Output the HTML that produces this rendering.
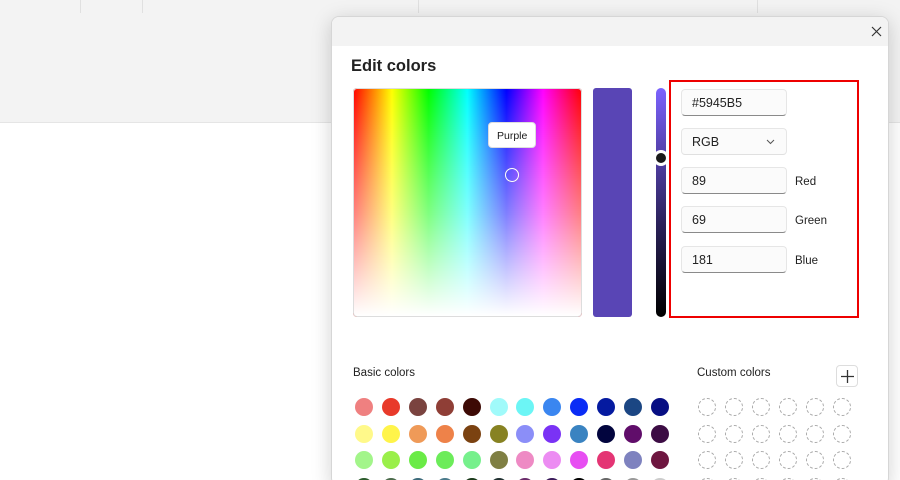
<!DOCTYPE html>
<html><head><style>
*{margin:0;padding:0;box-sizing:border-box}
html,body{width:900px;height:480px;overflow:hidden}
body{background:#fff;font-family:"Liberation Sans",sans-serif;position:relative;color:#1a1a1a}
.abs{position:absolute}
.top{left:0;top:0;width:900px;height:123px;background:#f3f3f3;border-bottom:1px solid #e5e5e5}
.sep{top:0;width:1px;height:13px;background:#e0e0e0}
.dlg{left:331px;top:16px;width:558px;height:470px;background:#fff;border:1px solid #d6d6d6;border-radius:8px;box-shadow:0 4px 20px rgba(0,0,0,.18);overflow:hidden}
.tb{left:0;top:0;width:558px;height:29px;background:#f3f3f3}
.inp{left:681px;width:106px;height:27px;border:1px solid #e6e6e6;border-bottom:1px solid #8a8a8a;border-radius:4px;background:#fbfbfb;font-size:12.5px;padding:6px 0 0 10px;color:#222}
.lbl{font-size:11.5px;color:#222}
.c{width:18px;height:18px;border-radius:50%}
.cc{width:18px;height:18px;border-radius:50%;border:1px dashed #aaa}
</style></head><body>
<div class="abs top"></div>
<div class="abs sep" style="left:80px"></div><div class="abs sep" style="left:142px"></div><div class="abs sep" style="left:418px"></div><div class="abs sep" style="left:757px"></div>
<div class="abs dlg"><div class="abs tb"></div>
<svg class="abs" style="left:539px;top:9px" width="11" height="11" viewBox="0 0 11 11"><path d="M1 1L10 10M10 1L1 10" stroke="#333" stroke-width="1.2"/></svg></div>
<div class="abs" style="left:351px;top:57px;font-size:16.5px;font-weight:bold;color:#222">Edit colors</div>
<div class="abs" style="left:353px;top:88px;width:229px;height:229px;border-radius:4px;background:linear-gradient(to right,#f00,#ff0 17%,#0f0 33%,#0ff 50%,#00f 67%,#f0f 83%,#f00)"></div>
<div class="abs" style="left:353px;top:88px;width:229px;height:229px;border-radius:4px;background:linear-gradient(to bottom,rgba(255,255,255,0),rgba(255,255,255,.5) 55%,#fff);border:1px solid #ddd"></div>
<div class="abs" style="left:488px;top:122px;width:48px;height:26px;background:#fff;border:1px solid #ddd;border-radius:4px;font-size:10.5px;padding:7px 0 0 8px">Purple</div>
<div class="abs" style="left:505px;top:168px;width:14px;height:14px;border-radius:50%;border:1.5px solid #fff;box-shadow:0 0 1px #888"></div>
<div class="abs" style="left:593px;top:88px;width:39px;height:229px;background:#5945b5;border-radius:3px"></div>
<div class="abs" style="left:656px;top:88px;width:10px;height:229px;border-radius:5px;background:linear-gradient(#7b63ff,#5945b5 25%,#2a2158 60%,#000)"></div>
<div class="abs" style="left:653px;top:150px;width:16px;height:16px;border-radius:50%;background:#1a1a1a;border:3px solid #fff"></div>
<div class="abs" style="left:669px;top:80px;width:190px;height:238px;border:2px solid #e00"></div>
<div class="abs inp" style="top:89px">#5945B5</div>
<div class="abs inp" style="top:128px;border-bottom-color:#e0e0e0">RGB<svg style="position:absolute;left:84px;top:10px" width="9" height="6" viewBox="0 0 9 6"><path d="M1 1L4.5 4.5L8 1" stroke="#555" fill="none" stroke-width="1"/></svg></div>
<div class="abs inp" style="top:167px">89</div>
<div class="abs inp" style="top:206px">69</div>
<div class="abs inp" style="top:246px">181</div>
<div class="abs lbl" style="left:795px;top:176px">Red</div>
<div class="abs lbl" style="left:795px;top:215px">Green</div>
<div class="abs lbl" style="left:795px;top:255px">Blue</div>
<div class="abs lbl" style="left:353px;top:367px">Basic colors</div>
<div class="abs lbl" style="left:697px;top:367px">Custom colors</div>
<div class="abs" style="left:836px;top:365px;width:22px;height:22px;border:1px solid #ddd;border-radius:4px;"><svg style="position:absolute;left:4px;top:4px" width="13" height="13" viewBox="0 0 13 13"><path d="M6.5 0V13M0 6.5H13" stroke="#333" stroke-width="1.3"/></svg></div>
<div id="sw"></div>
<script>
var cols=[["#ef8080","#e83a2a","#7a433f","#8f3e36","#3d0a05","#a0fafa","#6cf5f5","#3a86f0","#0a2cf5","#051aa0","#1b4683","#070e83"],
["#fff98a","#fff44a","#ef9a58","#ee8249","#7b4211","#878222","#8b8ef8","#7a32f5","#3a83c1","#02053e","#600d6a","#3c0c44"],
["#a3f58a","#9aef4a","#6aeb46","#6cec5a","#76f08c","#7f7f43","#ee8ac4","#ec8cf2","#e74ef2","#e43574","#7e82bf","#6e1640"],
["#2c5c2c","#4b6b4b","#3c6a7a","#4a7a8a","#1a3a1a","#203030","#6a2a6a","#3a1a5a","#000","#666","#999","#ccc"]];
var h="";
for(var r=0;r<4;r++){for(var i=0;i<12;i++){h+='<div class="abs c" style="left:'+(355+i*26.9)+'px;top:'+(398+r*26.6)+'px;background:'+cols[r][i]+'"></div>';}
for(var j=0;j<6;j++){h+='<div class="abs cc" style="left:'+(698+j*27)+'px;top:'+(398+r*26.6)+'px"></div>';}}
document.getElementById("sw").innerHTML=h;
</script>
</body></html>
